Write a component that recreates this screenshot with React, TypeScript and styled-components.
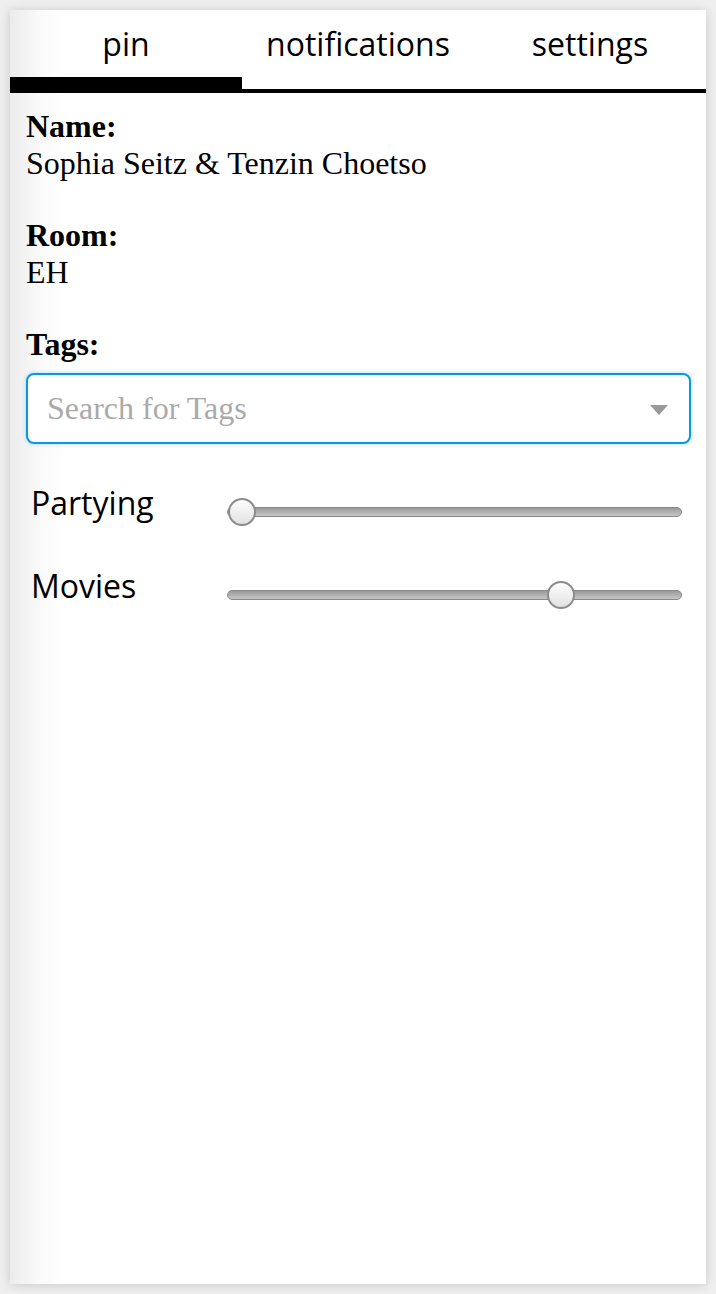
import styled, { createGlobalStyle } from 'styled-components';

const GlobalStyle = createGlobalStyle`
  html, body {
    margin: 0;
    padding: 0;
    background: #efefef;
  }
  body {
    padding: 10px;
    font-family: "Liberation Serif", serif;
  }
`

const TABS = ['pin', 'notifications', 'settings'];

const PREFERENCES = [
  { label: 'Partying', value: 0 },
  { label: 'Movies', value: 75 },
];

function App() {
  return (
    <>
      <GlobalStyle />
      <Panel>
        <TabBar>
          {TABS.map((tab, i) => (
            <Tab key={tab} active={i === 0}>{tab}</Tab>
          ))}
        </TabBar>
        <Content>
          <Field>
            <Label>Name:</Label>
            <Value>Sophia Seitz &amp; Tenzin Choetso</Value>
          </Field>
          <Field>
            <Label>Room:</Label>
            <Value>EH</Value>
          </Field>
          <Field>
            <Label>Tags:</Label>
            <TagSelect>
              <Placeholder>Search for Tags</Placeholder>
              <Arrow />
            </TagSelect>
          </Field>
          <Sliders>
            {PREFERENCES.map((pref) => (
              <SliderRow key={pref.label}>
                <SliderLabel>{pref.label}</SliderLabel>
                <SliderWrap>
                  <Range type="range" min={0} max={100} defaultValue={pref.value} />
                </SliderWrap>
              </SliderRow>
            ))}
          </Sliders>
        </Content>
      </Panel>
    </>
  );
}

export default App;

const Panel = styled.div`
  height: calc(100vh - 20px);
  background: linear-gradient(to right, #ececec 0, #fafafa 30px, #fff 55px);
  box-shadow: 0 1px 10px rgba(0, 0, 0, 0.16);
  display: flex;
  flex-direction: column;
`

const TabBar = styled.div`
  display: grid;
  grid-template-columns: repeat(3, 1fr);
  border-bottom: 4px solid #000;
`

const Tab = styled.div<{ active?: boolean }>`
  font-family: "Open Sans", sans-serif;
  font-size: 32px;
  color: #000;
  text-align: center;
  padding: 12px 0;
  border-bottom: 12px solid ${(p) => (p.active ? '#000' : 'transparent')};
  background: ${(p) => (p.active ? 'transparent' : '#fff')};
`

const Content = styled.div`
  padding: 15px 15px 0 16px;
`

const Field = styled.div`
  margin-bottom: 35px;

  &:last-of-type {
    margin-bottom: 0;
  }
`

const Label = styled.div`
  font-size: 32px;
  font-weight: bold;
  color: #000;
`

const Value = styled.div`
  font-size: 32px;
  color: #000;
`

const TagSelect = styled.div`
  margin-top: 10px;
  height: 71px;
  box-sizing: border-box;
  border: 2px solid #0a98e4;
  border-radius: 8px;
  box-shadow: 0 0 4px rgba(10, 152, 228, 0.35);
  background: #fff;
  display: flex;
  align-items: center;
  justify-content: space-between;
  padding: 0 21px 0 19px;
`

const Placeholder = styled.span`
  font-size: 32px;
  color: #aaa;
`

const Arrow = styled.span`
  width: 0;
  height: 0;
  border-left: 9px solid transparent;
  border-right: 9px solid transparent;
  border-top: 10px solid #999;
  margin-top: 2px;
`

const Sliders = styled.div`
  margin-top: 37px;
  display: flex;
  flex-direction: column;
  gap: 38px;
`

const SliderRow = styled.div`
  display: flex;
  align-items: flex-start;
`

const SliderLabel = styled.div`
  font-family: "Open Sans", sans-serif;
  font-size: 32px;
  color: #000;
  width: 196px;
  padding-left: 5px;
`

const SliderWrap = styled.div`
  flex: 1;
  padding: 17px 9px 0 0;
`

const Range = styled.input`
  -webkit-appearance: none;
  appearance: none;
  display: block;
  width: 100%;
  height: 28px;
  margin: 0;
  background: transparent;

  &::-webkit-slider-runnable-track {
    height: 10px;
    box-sizing: border-box;
    border: 1px solid #8a8a8a;
    border-radius: 5px;
    background: linear-gradient(to bottom, #9a9a9a, #c6c6c6);
  }

  &::-webkit-slider-thumb {
    -webkit-appearance: none;
    appearance: none;
    width: 28px;
    height: 28px;
    box-sizing: border-box;
    border-radius: 50%;
    border: 2px solid #8c8c8c;
    background: linear-gradient(to bottom, #fdfdfd, #e2e2e2);
    margin-top: -10px;
  }
`
